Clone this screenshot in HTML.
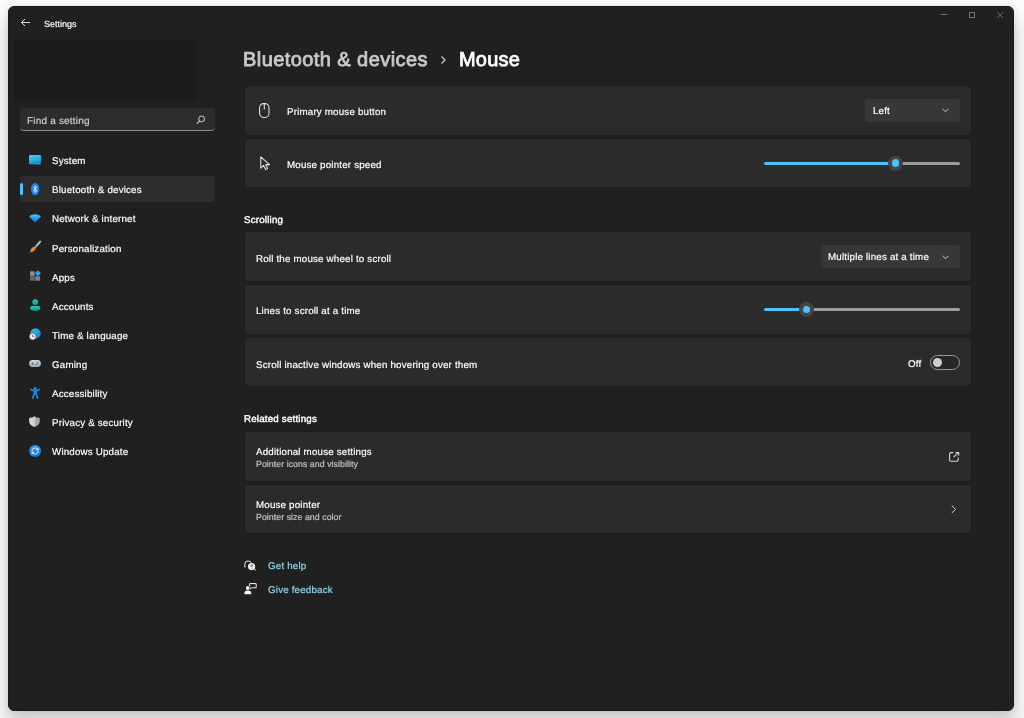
<!DOCTYPE html>
<html><head><meta charset="utf-8">
<style>
*{box-sizing:border-box;margin:0;padding:0}
html,body{width:1024px;height:718px;overflow:hidden}
body{background:#fbfbfb;font-family:"Liberation Sans",sans-serif;text-rendering:geometricPrecision;color:#fff;position:relative}
#win{position:absolute;left:8px;top:5.5px;width:1005.6px;height:705.5px;background:#202020;border:1px solid #191919;border-radius:6px;box-shadow:0 0 7px rgba(0,0,0,.10),0 14px 18px 2px rgba(0,0,0,.17)}
.a{position:absolute}
.x{position:absolute;white-space:nowrap;will-change:transform;-webkit-text-stroke:.18px currentColor;line-height:1;font-size:9.75px;letter-spacing:.19px;color:#fff;top:calc(var(--b)*1px - 0.8465em + 1.5px)}
.nv{left:52.1px}
.b{-webkit-text-stroke:0.4px #fff}
.card{position:absolute;left:245px;width:726px;height:48.7px;background:#2b2b2b;border-radius:4px;box-shadow:0 0 0 .7px #1c1c1c}
.dd{position:absolute;background:#373737;border-radius:3px}
.trk{position:absolute;height:3.3px;border-radius:2px}
.th{position:absolute;width:15px;height:15px;border-radius:50%;background:#454545}
.th::after{content:"";position:absolute;left:3.6px;top:3.6px;width:7.8px;height:7.8px;border-radius:50%;background:#4cc2ff}
svg{position:absolute;overflow:visible}
</style></head><body>
<div id="win"></div>

<!-- title bar -->
<svg style="left:20px;top:18px" width="12" height="9" viewBox="0 0 12 9"><path d="M1.5 4.5H10M5 1L1.5 4.5L5 8" fill="none" stroke="#dcdcdc" stroke-width="1"/></svg>
<div class="x" style="--b:26.1;left:44.2px;font-size:9px;letter-spacing:0">Settings</div>
<div class="a" style="left:941px;top:14.3px;width:6px;height:1px;background:#747474"></div>
<div class="a" style="left:968.7px;top:12px;width:6.5px;height:6.2px;border:1px solid #747474;border-radius:.5px"></div>
<svg style="left:996.6px;top:12px" width="6.4" height="6.2" viewBox="0 0 6.4 6.2"><path d="M.3 .2L6.1 6M6.1 .2L.3 6" stroke="#747474" stroke-width=".9"/></svg>

<!-- account placeholder -->
<div class="a" style="left:14px;top:39px;width:182px;height:61px;background:#1c1c1c"></div>
<!-- search -->
<div class="a" style="left:19.6px;top:108px;width:195px;height:22.7px;background:#2c2c2c;border-radius:4px;border-bottom:1px solid #8c8c8c"></div>
<div class="x" style="--b:123.7;left:27.4px;font-size:10px;color:#cfcfcf">Find a setting</div>
<svg style="left:196px;top:115px" width="10" height="10" viewBox="0 0 10 10"><circle cx="5.6" cy="3.9" r="2.9" fill="none" stroke="#d0d0d0" stroke-width="1"/><path d="M3.6 5.9L1 8.5" stroke="#d0d0d0" stroke-width="1.1"/></svg>

<!-- nav selection -->
<div class="a" style="left:20px;top:176px;width:194.5px;height:26px;background:#2d2d2d;border-radius:4px"></div>
<div class="a" style="left:20px;top:183.3px;width:2.6px;height:11.3px;background:#4cc2ff;border-radius:2px"></div>

<div class="x nv" style="--b:163.65">System</div>
<div class="x nv" style="--b:192.95">Bluetooth &amp; devices</div>
<div class="x nv" style="--b:222.15">Network &amp; internet</div>
<div class="x nv" style="--b:251.35">Personalization</div>
<div class="x nv" style="--b:280.45">Apps</div>
<div class="x nv" style="--b:309.65">Accounts</div>
<div class="x nv" style="--b:338.75">Time &amp; language</div>
<div class="x nv" style="--b:367.85">Gaming</div>
<div class="x nv" style="--b:396.95">Accessibility</div>
<div class="x nv" style="--b:426.15">Privacy &amp; security</div>
<div class="x nv" style="--b:455.15">Windows Update</div>


<!-- nav icons -->
<svg style="left:0;top:0" width="1" height="1">
<defs>
<linearGradient id="gSys" x1="0" y1="0" x2="0.3" y2="1"><stop offset="0" stop-color="#4fd2f2"/><stop offset=".8" stop-color="#1ca2d8"/><stop offset="1" stop-color="#1580b5"/></linearGradient>
<linearGradient id="gWifi" x1="0" y1="0" x2="0" y2="1"><stop offset="0" stop-color="#52c8fa"/><stop offset=".55" stop-color="#1c9af0"/><stop offset="1" stop-color="#0b6fd0"/></linearGradient>
<linearGradient id="gGlobe" x1="0" y1="0" x2="1" y2="1"><stop offset="0" stop-color="#3ec4ec"/><stop offset="1" stop-color="#0f7ccc"/></linearGradient>
<linearGradient id="gBrush" x1="0" y1="0" x2="1" y2="1"><stop offset="0" stop-color="#ffb52a"/><stop offset="1" stop-color="#e0600a"/></linearGradient>
<linearGradient id="gAcc" x1="0" y1="0" x2="0" y2="1"><stop offset="0" stop-color="#2ac9b0"/><stop offset="1" stop-color="#139e8e"/></linearGradient>
<linearGradient id="gPad" x1="0" y1="0" x2="0" y2="1"><stop offset="0" stop-color="#d6d6d6"/><stop offset="1" stop-color="#a9a9a9"/></linearGradient>
<linearGradient id="gUpd" x1="0" y1="0" x2="0" y2="1"><stop offset="0" stop-color="#2b9cf0"/><stop offset="1" stop-color="#1478d4"/></linearGradient>
</defs></svg>
<svg style="left:28.8px;top:154.8px" width="12.1" height="9.5" viewBox="0 0 12.1 9.5"><rect x="0" y="0" width="12.1" height="9.5" rx="1.2" fill="url(#gSys)"/><rect x="7" y="8.2" width="4" height=".8" fill="#7fd6f2" opacity=".6"/></svg>
<svg style="left:30.8px;top:182.9px" width="8.3" height="12.2" viewBox="0 0 8.3 12.2"><ellipse cx="4.15" cy="6.1" rx="4.15" ry="6.1" fill="#1a86f7"/><path d="M2.3 4.3L5.9 7.7L4.1 9.5V2.7L5.9 4.5L2.3 7.9" fill="none" stroke="#fff" stroke-width=".8" stroke-linejoin="round"/></svg>
<svg style="left:28.7px;top:213.9px" width="12.1" height="8.7" viewBox="0 0 12.1 8.7"><path d="M6.05 8.6L0.1 2.6A8.4 8.4 0 0 1 12 2.6Z" fill="url(#gWifi)"/></svg>
<svg style="left:29px;top:241.3px" width="12" height="12" viewBox="0 0 12 12"><path d="M11.2 .6L6 6.6" stroke="#9c9c9c" stroke-width="2.2" stroke-linecap="round"/><path d="M11.2 .6L8 4.3" stroke="#c8c8c8" stroke-width="1.2" stroke-linecap="round"/><path d="M5.2 6.1C6.5 6.3 7 7.5 6.3 8.7C5.4 10.4 3 11.3 .4 11.4C1.6 10.6 1.6 9.6 2 8.4C2.5 6.9 3.8 5.9 5.2 6.1Z" fill="url(#gBrush)"/></svg>
<svg style="left:29.7px;top:270.4px" width="11.2" height="10.7" viewBox="0 0 11.2 10.7"><rect x=".1" y="1.3" width="4.5" height="4.5" fill="#8f8f8f"/><rect x=".1" y="6.2" width="4.5" height="4.5" fill="#6a6a6a"/><rect x="5.1" y="6.2" width="5" height="4.5" fill="#808080"/><path d="M7.9 .2L11 3.2L7.9 6.2L4.9 3.2Z" fill="#2aa3f5"/></svg>
<svg style="left:29.7px;top:299.4px" width="10.4" height="11.8" viewBox="0 0 10.4 11.8"><circle cx="5.2" cy="3.1" r="2.9" fill="url(#gAcc)"/><path d="M.1 9.2C.1 7.8 1 6.9 2.4 6.9H8C9.4 6.9 10.3 7.8 10.3 9.2C10.3 10.9 8.2 11.7 5.2 11.7C2.2 11.7 .1 10.9 .1 9.2Z" fill="url(#gAcc)"/></svg>
<svg style="left:29px;top:328.2px" width="12" height="12.4" viewBox="0 0 12 12.4"><circle cx="6.5" cy="5.4" r="5.2" fill="url(#gGlobe)"/><circle cx="3.7" cy="8.5" r="3.5" fill="#e6e6e6" stroke="#202020" stroke-width=".5"/><path d="M3.6 6.6V8.6H5.2" fill="none" stroke="#555" stroke-width=".7"/></svg>
<svg style="left:29px;top:359.8px" width="12" height="7.2" viewBox="0 0 12 7.2"><rect x=".1" y=".1" width="11.8" height="7" rx="3.5" fill="url(#gPad)"/><path d="M2.4 3.6H4.6M3.5 2.5V4.7" stroke="#555" stroke-width=".8"/><circle cx="8.6" cy="2.6" r=".9" fill="#1e8ae6"/><circle cx="7.4" cy="4.6" r=".9" fill="#1e8ae6"/></svg>
<svg style="left:29.6px;top:386.6px" width="10.4" height="12" viewBox="0 0 10.4 12"><circle cx="5.2" cy="1.6" r="1.6" fill="#1f8fe8"/><path d="M.9 2.6L5.2 4.5L9.5 2.6" fill="none" stroke="#1f8fe8" stroke-width="1.6" stroke-linecap="round" stroke-linejoin="round"/><path d="M5.2 4.2V7.2" stroke="#1f8fe8" stroke-width="2.8"/><path d="M4.3 6.6L2.8 11.1M6.1 6.6L7.6 11.1" stroke="#1f8fe8" stroke-width="1.7" stroke-linecap="round"/></svg>
<svg style="left:29.3px;top:416px" width="11" height="11.2" viewBox="0 0 11 11.2"><defs><linearGradient id="gSh" x1="0" y1="0" x2="1" y2="0"><stop offset="0" stop-color="#e2e2e2"/><stop offset=".5" stop-color="#c9c9c9"/><stop offset=".5" stop-color="#b2b2b2"/><stop offset="1" stop-color="#9c9c9c"/></linearGradient></defs><path d="M5.5 .2C4 1.2 2.4 1.7 .9 1.8C.5 1.8 .2 2.1 .2 2.5V5.3C.2 8.1 2.2 10 5.5 11.1C8.8 10 10.8 8.1 10.8 5.3V2.5C10.8 2.1 10.5 1.8 10.1 1.8C8.6 1.7 7 1.2 5.5 .2Z" fill="url(#gSh)"/></svg>
<svg style="left:28.8px;top:445px" width="12.2" height="12" viewBox="0 0 12.2 12"><circle cx="6.1" cy="6" r="6" fill="url(#gUpd)"/><path d="M3 6A3.1 3.1 0 0 1 8.6 4.2" fill="none" stroke="#fff" stroke-width=".85"/><path d="M9.5 2.6V5.2H7Z" fill="#fff"/><path d="M9.2 6A3.1 3.1 0 0 1 3.6 7.8" fill="none" stroke="#fff" stroke-width=".85"/><path d="M2.7 9.4V6.8H5.2Z" fill="#fff"/></svg>

<!-- help / feedback icons -->
<svg style="left:243.5px;top:558.8px" width="13" height="12.2" viewBox="0 0 13 12.2"><path d="M1.6 7.9H.7V5.4A3.5 3.5 0 0 1 7.7 5.4" fill="none" stroke="#f0f0f0" stroke-width="1"/><circle cx="7.6" cy="7.6" r="4.1" fill="#202020"/><circle cx="7.6" cy="7.6" r="3.6" fill="#f4f4f4"/><path d="M9.8 10.2L11.9 12L10.9 9.2Z" fill="#f4f4f4"/><path d="M6.7 6.7A.95 .95 0 1 1 7.7 7.6V8.3" fill="none" stroke="#303030" stroke-width=".8"/><circle cx="7.7" cy="9.3" r=".45" fill="#303030"/></svg>
<svg style="left:243.6px;top:582.8px" width="13" height="11.5" viewBox="0 0 13 11.5"><path d="M5.6 .6H12.2V4.8H7.6L6.2 6V4.8H5.6Z" fill="none" stroke="#f0f0f0" stroke-width="1" stroke-linejoin="round"/><circle cx="3.8" cy="5" r="2.4" fill="#202020"/><circle cx="3.8" cy="5" r="1.9" fill="#f4f4f4"/><path d="M.4 11.3V10C.4 8.3 1.6 7.4 3 7.4H4.6C6 7.4 7.3 8.3 7.3 10V11.3Z" fill="#f4f4f4"/></svg>

<!-- header -->
<div class="x" style="--b:65.85;left:242.8px;font-size:20px;letter-spacing:0.43px;-webkit-text-stroke:0.8px #c9c9c9;color:#c9c9c9">Bluetooth &amp; devices</div>
<svg style="left:440px;top:55px" width="7" height="10" viewBox="0 0 7 10"><path d="M1.5 1.5L5 5L1.5 8.5" fill="none" stroke="#c9c9c9" stroke-width="1.3"/></svg>
<div class="x" style="--b:65.85;left:458.8px;font-size:20px;letter-spacing:0.2px;-webkit-text-stroke:0.8px #fff">Mouse</div>

<!-- card 1 -->
<div class="card" style="top:86px"></div>
<svg style="left:259px;top:102.8px" width="11" height="15" viewBox="0 0 11 15"><rect x=".6" y=".6" width="9.4" height="13.9" rx="4" ry="4.3" fill="none" stroke="#e6e6e6" stroke-width="1.05"/><path d="M5.3 .6V6.4" stroke="#e6e6e6" stroke-width="1.05"/></svg>
<div class="x" style="--b:115;left:287.4px">Primary mouse button</div>
<div class="dd" style="left:865.2px;top:98.8px;width:94.5px;height:22.8px"></div>
<div class="x" style="--b:114;left:872.6px">Left</div>
<svg style="left:942px;top:108px" width="7" height="5" viewBox="0 0 7 5"><path d="M.6 .8L3.5 3.7L6.4 .8" fill="none" stroke="#cfcfcf" stroke-width="1"/></svg>

<!-- card 2 -->
<div class="card" style="top:138.8px"></div>
<svg style="left:260px;top:156px" width="11" height="15" viewBox="0 0 11 15"><path d="M.8 .8V12.2L3.6 9.4L5.6 13.6L7.6 12.6L5.7 8.6H9.6Z" fill="none" stroke="#e6e6e6" stroke-width="1.05" stroke-linejoin="round"/></svg>
<div class="x" style="--b:167.8;left:287.4px">Mouse pointer speed</div>
<div class="trk" style="left:763.8px;top:161.8px;width:132px;background:#4cc2ff"></div>
<div class="trk" style="left:896px;top:161.8px;width:64px;background:#9d9d9d"></div>
<div class="th" style="left:888.1px;top:155.7px"></div>

<!-- scrolling -->
<div class="x b" style="--b:223;left:244.1px">Scrolling</div>
<div class="card" style="top:232.3px"></div>
<div class="x" style="--b:261.6;left:256.4px">Roll the mouse wheel to scroll</div>
<div class="dd" style="left:820.9px;top:245px;width:139.1px;height:22.7px"></div>
<div class="x" style="--b:259.9;left:828.3px">Multiple lines at a time</div>
<svg style="left:942px;top:254.5px" width="7" height="5" viewBox="0 0 7 5"><path d="M.6 .8L3.5 3.7L6.4 .8" fill="none" stroke="#cfcfcf" stroke-width="1"/></svg>

<div class="card" style="top:285.1px"></div>
<div class="x" style="--b:314.2;left:256.4px">Lines to scroll at a time</div>
<div class="trk" style="left:764.1px;top:308px;width:43px;background:#4cc2ff"></div>
<div class="trk" style="left:806px;top:308px;width:154px;background:#9d9d9d"></div>
<div class="th" style="left:799.1px;top:302.1px"></div>

<div class="card" style="top:337.6px"></div>
<div class="x" style="--b:367.4;left:256.4px">Scroll inactive windows when hovering over them</div>
<div class="x" style="--b:366.6;left:907.7px">Off</div>
<div class="a" style="left:930.1px;top:354.5px;width:30px;height:15.2px;border-radius:8px;border:1px solid #9a9a9a;background:#272727"></div>
<div class="a" style="left:932.8px;top:357.5px;width:9px;height:9px;border-radius:50%;background:#cfcfcf"></div>

<!-- related -->
<div class="x b" style="--b:421.5;left:244px">Related settings</div>
<div class="card" style="top:432px"></div>
<div class="x" style="--b:454.6;left:256.2px">Additional mouse settings</div>
<div class="x" style="--b:466;left:255.7px;font-size:8.8px;letter-spacing:.04px;color:#c5c5c5">Pointer icons and visibility</div>
<svg style="left:948.8px;top:451.8px" width="11" height="10" viewBox="0 0 11 10"><path d="M4.2 .6H1.9A1.3 1.3 0 0 0 .6 1.9V7.9A1.3 1.3 0 0 0 1.9 9.2H7.9A1.3 1.3 0 0 0 9.2 7.9V5.6" fill="none" stroke="#d8d8d8" stroke-width="1.05"/><path d="M4.6 5.2L9.6 .4M6.4 .5H9.7V3.8" fill="none" stroke="#d8d8d8" stroke-width="1.05"/></svg>
<div class="card" style="top:484.6px"></div>
<div class="x" style="--b:507.7;left:256.2px">Mouse pointer</div>
<div class="x" style="--b:518.8;left:255.7px;font-size:8.8px;letter-spacing:.04px;color:#c5c5c5">Pointer size and color</div>
<svg style="left:951.1px;top:505px" width="6" height="9" viewBox="0 0 6 9"><path d="M.8 .6L4.6 4.3L.8 8" fill="none" stroke="#d6d6d6" stroke-width="1"/></svg>

<!-- links -->
<div class="x" style="--b:569;left:268.1px;color:#92d6ee">Get help</div>
<div class="x" style="--b:592.4;left:268.1px;color:#92d6ee">Give feedback</div>
</body></html>
